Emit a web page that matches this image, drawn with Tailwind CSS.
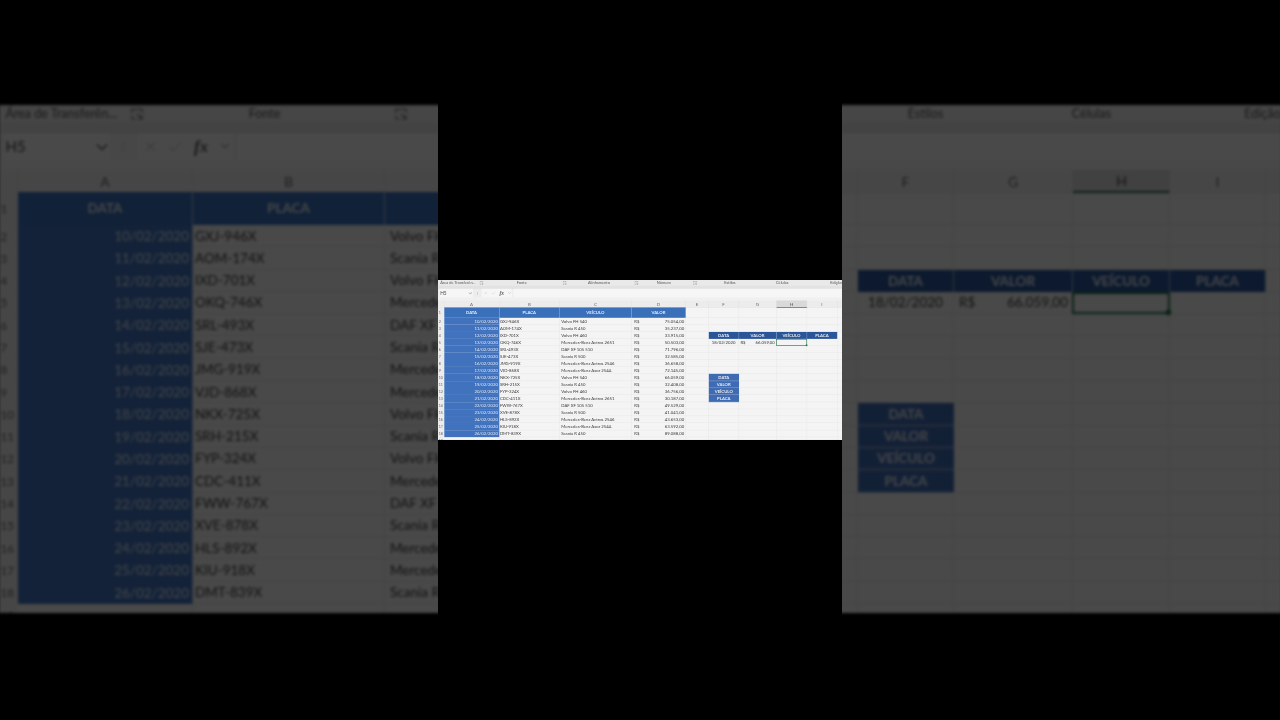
<!DOCTYPE html>
<html lang="pt-BR">
<head>
    <meta charset="UTF-8">
    <title>Planilha</title>
    <script src="https://cdn.jsdelivr.net/npm/@tailwindcss/browser@4"></script>
</head>
<body class="bg-black">
<div class="relative w-[1280px] h-[720px] overflow-hidden bg-black font-['Lato','Liberation_Sans',sans-serif]">

    <!-- video blurred behind -->
    <div class="pt-[105px] -ml-[1.5px] blur-[1.5px]" id="bg"></div>
    <div class="absolute inset-0 bg-black/70"></div>

    <!-- the actual frame in the middle -->
    <div class="absolute top-0 left-[438px] w-[404px] h-[720px] bg-black flex items-center">
        <div class="w-[404px] h-[160px] overflow-hidden blur-[0.45px]">
            <div id="small" class="origin-top-left scale-[0.3149] w-[1283px] h-[508px]"></div>
        </div>
    </div>
</div>

<script>
    const rows = [
        ["10/02/2020", "GXJ-946X", "Volvo FH 540", "75.054,00"],
        ["11/02/2020", "AOM-174X", "Scania R 450", "35.237,00"],
        ["12/02/2020", "IXD-701X", "Volvo FH 460", "33.915,00"],
        ["13/02/2020", "OKQ-746X", "Mercedes-Benz Actros 2651", "50.503,00"],
        ["14/02/2020", "SRL-493X", "DAF XF 105 510", "71.796,00"],
        ["15/02/2020", "SJE-473X", "Scania R 500", "32.585,00"],
        ["16/02/2020", "JMG-919X", "Mercedes-Benz Actros 2546", "36.658,00"],
        ["17/02/2020", "VJD-868X", "Mercedes-Benz Axor 2544.", "72.145,00"],
        ["18/02/2020", "NKX-725X", "Volvo FH 540", "66.059,00"],
        ["19/02/2020", "SRH-215X", "Scania R 450", "32.408,00"],
        ["20/02/2020", "FYP-324X", "Volvo FH 460", "36.756,00"],
        ["21/02/2020", "CDC-411X", "Mercedes-Benz Actros 2651", "30.187,00"],
        ["22/02/2020", "FWW-767X", "DAF XF 105 510", "49.529,00"],
        ["23/02/2020", "XVE-878X", "Scania R 500", "41.041,00"],
        ["24/02/2020", "HLS-892X", "Mercedes-Benz Actros 2546", "43.653,00"],
        ["25/02/2020", "KIU-918X", "Mercedes-Benz Axor 2544.", "63.592,00"],
        ["26/02/2020", "DMT-839X", "Scania R 450", "89.088,00"]
    ];
    const lista = { 10: "DATA", 11: "VALOR", 12: "VEÍCULO", 13: "PLACA" };

    const cols = "grid grid-cols-[19.5px_175px_192px_228px_172px_73px_96px_119px_97px_96px_35px]";
    const cell = "flex items-center min-w-0 whitespace-nowrap overflow-hidden border-r border-b border-[#e2e2e2] text-[13.5px] text-[#3a3a3a]";
    const head = "flex items-center justify-center whitespace-nowrap overflow-hidden border-r border-white/60 font-bold text-[13.5px] text-[#e6ebf4]";

    const launcher = `<svg class="w-[12px] h-[12px] flex-none" viewBox="0 0 12 12" fill="none" stroke="#6a6a6a" stroke-width="1.2"><path d="M1 5V1h10v4"/><path d="M1 8v3h4"/><path d="M6 6l5 5M11 7.5V11H7.5"/></svg>`;

    function empty() { return `<div class="${cell}"></div>`; }

    function rowHtml(n) {
        const h = n == 1 ? "h-[33px]" : "h-[22.3px]";
        let html = `<div class="${cols} ${h}">`;
        html += `<div class="flex items-center pl-[2px] bg-[#ececec] text-[11.5px] text-[#666] ${n == 5 ? "bg-[#dcdcdc]" : ""}">${n}</div>`;

        if (n == 1) {
            for (const t of ["DATA", "PLACA", "VEÍCULO", "VALOR"]) html += `<div class="${head} bg-[#3a6fb9]">${t}</div>`;
        } else if (n <= 18) {
            const r = rows[n - 2];
            html += `<div class="flex items-center justify-end pr-[3px] bg-[#4072bd] border-r border-white/50 text-[13.5px] text-[#dfe7f4]">${r[0]}</div>`;
            html += `<div class="${cell} pl-[2px]">${r[1]}</div>`;
            html += `<div class="${cell} pl-[5px]">${r[2]}</div>`;
            html += `<div class="${cell} justify-between pl-[9px] pr-[4px]"><span>R$</span><span>${r[3]}</span></div>`;
        } else {
            html += empty() + empty() + empty() + empty();
        }

        html += empty(); // E
        if (n == 4) {
            for (const t of ["DATA", "VALOR", "VEÍCULO", "PLACA"]) html += `<div class="${head} bg-[#2a5699]">${t}</div>`;
        } else if (n == 5) {
            html += `<div class="${cell} justify-center">18/02/2020</div>`;
            html += `<div class="${cell} justify-between pl-[5px] pr-[4px]"><span>R$</span><span>66.059,00</span></div>`;
            html += `<div class="relative border-2 border-[#1f7244] -ml-px"><span class="absolute -right-[3px] -bottom-[3px] w-[5px] h-[5px] bg-[#1f7244]"></span></div>`;
            html += empty();
        } else {
            html += lista[n]
                ? `<div class="flex items-center justify-center border-b border-white/60 bg-[#3f6bb3] font-bold text-[13.5px] text-[#e6ebf4]">${lista[n]}</div>`
                : empty();
            html += empty() + empty() + empty();
        }
        return html + empty() + `</div>`;
    }

    let sheet = `<div class="w-[1283px] h-[508px] overflow-hidden bg-[#f4f4f4]">
        <div class="flex h-[17px] bg-[#e9e9e9] text-[12.5px] leading-[17px] text-[#555]">
            <div class="w-[148px] flex-none flex items-center justify-between pl-[7px] pr-[4px]"><span>Área de Transferên...</span>${launcher}</div>
            <div class="w-[264px] flex-none flex items-center pr-[4px]"><span class="flex-1 text-center pr-[12px]">Fonte</span>${launcher}</div>
            <div class="w-[230px] flex-none flex items-center pr-[6px]"><span class="flex-1 text-center pr-[14px]">Alinhamento</span>${launcher}</div>
            <div class="w-[188px] flex-none flex items-center pr-[8px]"><span class="flex-1 text-center pr-[18px]">Número</span>${launcher}</div>
            <div class="w-[194px] flex-none text-center">Estilos</div>
            <div class="w-[138px] flex-none text-center">Células</div>
            <div class="flex-1 text-right pr-[1px]">Edição</div>
        </div>
        <div class="h-[11px] bg-[#e2e2e2] border-b border-[#d2d2d2]"></div>
        <div class="flex items-center gap-[5px] h-[27px] pl-[5px] bg-[#ededed]">
            <div class="flex items-center justify-between w-[106px] h-[27px] px-[2px] bg-[#f6f6f6] text-[15px] text-[#444]">H5
                <svg class="w-[12px] h-[8px]" viewBox="0 0 12 8" fill="none" stroke="#555" stroke-width="1.5"><path d="M1 1.5l5 5 5-5"/></svg>
            </div>
            <div class="w-[18px] text-center text-[11px] leading-[6px] tracking-tight text-[#999]">⋮</div>
            <div class="flex items-center justify-between w-[95px] h-[27px] pl-[7px] pr-[2px] bg-[#f6f6f6]">
                <svg class="w-[11px] h-[11px]" viewBox="0 0 11 11" fill="none" stroke="#c4c4c4" stroke-width="1.1"><path d="M1 1l9 9M10 1l-9 9"/></svg>
                <svg class="w-[14px] h-[11px]" viewBox="0 0 14 11" fill="none" stroke="#c4c4c4" stroke-width="1.1"><path d="M1 6l4 4 8-9"/></svg>
                <span class="font-['Liberation_Serif',serif] italic font-bold text-[17px] text-[#555]">fx</span>
                <svg class="w-[10px] h-[7px]" viewBox="0 0 10 7" fill="none" stroke="#999" stroke-width="1.2"><path d="M1 1l4 4 4-4"/></svg>
            </div>
            <div class="flex-1 h-[27px] bg-[#f6f6f6]"></div>
        </div>
        <div class="h-[10px] bg-[#f0f0f0]"></div>
        <div class="${cols} h-[22px] bg-[#ececec] text-[14px] text-[#666]">`;
    for (const c of ["", "A", "B", "C", "D", "E", "F", "G", "H", "I", ""]) {
        sheet += c == "H"
            ? `<div class="flex items-center justify-center bg-[#d9d9d9] border-b-2 border-[#1f7244] text-[#444]">H</div>`
            : `<div class="flex items-center justify-center border-r border-b border-[#dcdcdc]">${c}</div>`;
    }
    sheet += `</div>`;
    for (let n = 1; n <= 19; n++) sheet += rowHtml(n);
    sheet += `</div>`;

    document.getElementById("bg").innerHTML = sheet;
    document.getElementById("small").innerHTML = sheet;
</script>
</body>
</html>
